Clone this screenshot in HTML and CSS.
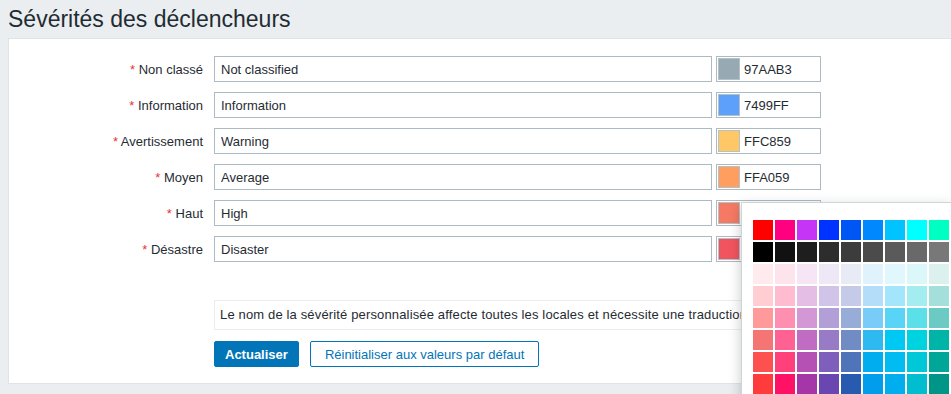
FILE: index.html
```html
<!DOCTYPE html>
<html lang="fr">
<head>
  <meta charset="UTF-8" />
  <title>Sévérités des déclencheurs</title>
  <link rel="stylesheet" href="styles.css">
</head>
<body>
  <div class="header">
    <h1>Sévérités des déclencheurs</h1>
  </div>

  <div class="card">
    <div class="row">
      <label class="label"><span class="req">*</span> Non classé</label>
      <input class="text" type="text" value="Not classified" />
      <div class="color"><span class="swatch sw-na"></span><span class="hex">97AAB3</span></div>
    </div>
    <div class="row">
      <label class="label"><span class="req">*</span> Information</label>
      <input class="text" type="text" value="Information" />
      <div class="color"><span class="swatch sw-info"></span><span class="hex">7499FF</span></div>
    </div>
    <div class="row">
      <label class="label"><span class="req">*</span> Avertissement</label>
      <input class="text" type="text" value="Warning" />
      <div class="color"><span class="swatch sw-warn"></span><span class="hex">FFC859</span></div>
    </div>
    <div class="row">
      <label class="label"><span class="req">*</span> Moyen</label>
      <input class="text" type="text" value="Average" />
      <div class="color"><span class="swatch sw-avg"></span><span class="hex">FFA059</span></div>
    </div>
    <div class="row">
      <label class="label"><span class="req">*</span> Haut</label>
      <input class="text" type="text" value="High" />
      <div class="color"><span class="swatch sw-high"></span><span class="hex">E97659</span></div>
    </div>
    <div class="row">
      <label class="label"><span class="req">*</span> Désastre</label>
      <input class="text" type="text" value="Disaster" />
      <div class="color"><span class="swatch sw-dis"></span><span class="hex">E45959</span></div>
    </div>

    <div class="note">Le nom de la sévérité personnalisée affecte toutes les locales et nécessite une traduction manuelle !</div>

    <div class="buttons">
      <button class="btn">Actualiser</button>
      <button class="btn btn-alt">Réinitialiser aux valeurs par défaut</button>
    </div>
  </div>

  <!-- color picker overlay -->
  <div class="picker">
    <div class="palette">
      <span style="background:#ff0000"></span><span style="background:#ff0080"></span><span style="background:#c535f5"></span><span style="background:#0033ff"></span><span style="background:#0055f5"></span><span style="background:#0088ff"></span><span style="background:#00c3ff"></span><span style="background:#00ffff"></span><span style="background:#00ffc3"></span>
      <span style="background:#000000"></span><span style="background:#111111"></span><span style="background:#1e1e1e"></span><span style="background:#2d2d2d"></span><span style="background:#3c3c3c"></span><span style="background:#4b4b4b"></span><span style="background:#5a5a5a"></span><span style="background:#696969"></span><span style="background:#787878"></span>
      <span style="background:#ffebee"></span><span style="background:#fde4ec"></span><span style="background:#f5e5f5"></span><span style="background:#ede7f6"></span><span style="background:#e8eaf6"></span><span style="background:#e0f2fc"></span><span style="background:#e1f7fe"></span><span style="background:#dcf7fa"></span><span style="background:#dcf1ee"></span>
      <span style="background:#ffcdd2"></span><span style="background:#ffbbd0"></span><span style="background:#e5bee5"></span><span style="background:#d1c4e9"></span><span style="background:#c4cae8"></span><span style="background:#b3ddf9"></span><span style="background:#a3e5fa"></span><span style="background:#a3ecf0"></span><span style="background:#a5dfdb"></span>
      <span style="background:#ff9a9a"></span><span style="background:#ff8fb1"></span><span style="background:#d497d5"></span><span style="background:#b39fd8"></span><span style="background:#98acd8"></span><span style="background:#7accf8"></span><span style="background:#5ad4f6"></span><span style="background:#5be0ea"></span><span style="background:#6bcbc4"></span>
      <span style="background:#f57474"></span><span style="background:#ff6292"></span><span style="background:#c06cc2"></span><span style="background:#977bc6"></span><span style="background:#718bc4"></span><span style="background:#2eb9f0"></span><span style="background:#00c8f5"></span><span style="background:#00d3e0"></span><span style="background:#00b5a8"></span>
      <span style="background:#ff5050"></span><span style="background:#ff407a"></span><span style="background:#b551b5"></span><span style="background:#7e5fbb"></span><span style="background:#4f74b9"></span><span style="background:#00aeef"></span><span style="background:#00bcf2"></span><span style="background:#00c8d8"></span><span style="background:#00a698"></span>
      <span style="background:#ff3b3b"></span><span style="background:#ff1166"></span><span style="background:#a436a8"></span><span style="background:#6a47b0"></span><span style="background:#285bb0"></span><span style="background:#009ded"></span><span style="background:#00adef"></span><span style="background:#00bdd0"></span><span style="background:#009687"></span>
    </div>
  </div>
</body>
</html>
```

FILE: styles.css
```css
html, body {
  overflow: hidden;
}
body {
  margin: 0;
  background-color: #ebeef0;
  color: #1f2c33;
  font-family: "Liberation Sans", Arial, sans-serif;
  font-size: 13px;
}
.header {
  padding: 4px 8px;
}
.header h1 {
  margin: 0;
  font-size: 23px;
  font-weight: normal;
  line-height: 30px;
}
.card {
  margin-left: 8px;
  padding: 17px 0 16px;
  background: #ffffff;
  border: 1px solid #dfe4e7;
  border-right: none;
}
.row {
  display: flex;
  align-items: center;
  height: 26px;
  margin-bottom: 10px;
}
.label {
  width: 194px;
  margin-right: 11px;
  text-align: right;
}
.req {
  color: #e33734;
}
.text {
  width: 498px;
  height: 26px;
  box-sizing: border-box;
  padding: 0 6px;
  font-family: inherit;
  font-size: 13px;
  color: #1f2c33;
  background: #ffffff;
  border: 1px solid #acbbc2;
  border-radius: 0;
  outline: none;
}
.color {
  display: flex;
  align-items: center;
  width: 105px;
  height: 26px;
  box-sizing: border-box;
  margin-left: 4px;
  padding: 1px;
  border: 1px solid #acbbc2;
}
.swatch {
  width: 20px;
  height: 20px;
  border: 1px solid #b4c2c8;
}
.hex {
  margin-left: 4px;
}
.sw-na { background: #97aab3; }
.sw-info { background: #5ca0fb; }
.sw-warn { background: #ffc766; }
.sw-avg { background: #ff9e5e; }
.sw-high { background: #f67a63; }
.sw-dis { background: #f2545f; }
.note {
  margin: 38px 0 0 205px;
  width: 700px;
  height: 30px;
  box-sizing: border-box;
  padding: 0 5px;
  line-height: 28px;
  letter-spacing: 0.15px;
  white-space: nowrap;
  overflow: hidden;
  border: 1px solid #ebeef0;
}
.buttons {
  display: flex;
  gap: 11px;
  margin: 11px 0 0 205px;
}
.btn {
  height: 26px;
  padding: 0 10px;
  font-family: inherit;
  font-size: 13px;
  font-weight: bold;
  color: #ffffff;
  background: #0275b8;
  border: 1px solid #0275b8;
  border-radius: 2px;
  cursor: pointer;
}
.btn-alt {
  padding: 0 14px;
  font-weight: normal;
  color: #0275b8;
  background: #ffffff;
}
.picker {
  position: absolute;
  top: 202px;
  left: 741px;
  right: 0;
  height: 260px;
  padding: 17px 0 0 11px;
  background: #ffffff;
  border: 1px solid #ccd5d9;
  border-right: none;
  box-shadow: 0 4px 12px rgba(0, 0, 0, 0.22);
}
.palette {
  display: grid;
  grid-template-columns: repeat(9, 20px);
  grid-auto-rows: 20px;
  gap: 2px;
}
```
